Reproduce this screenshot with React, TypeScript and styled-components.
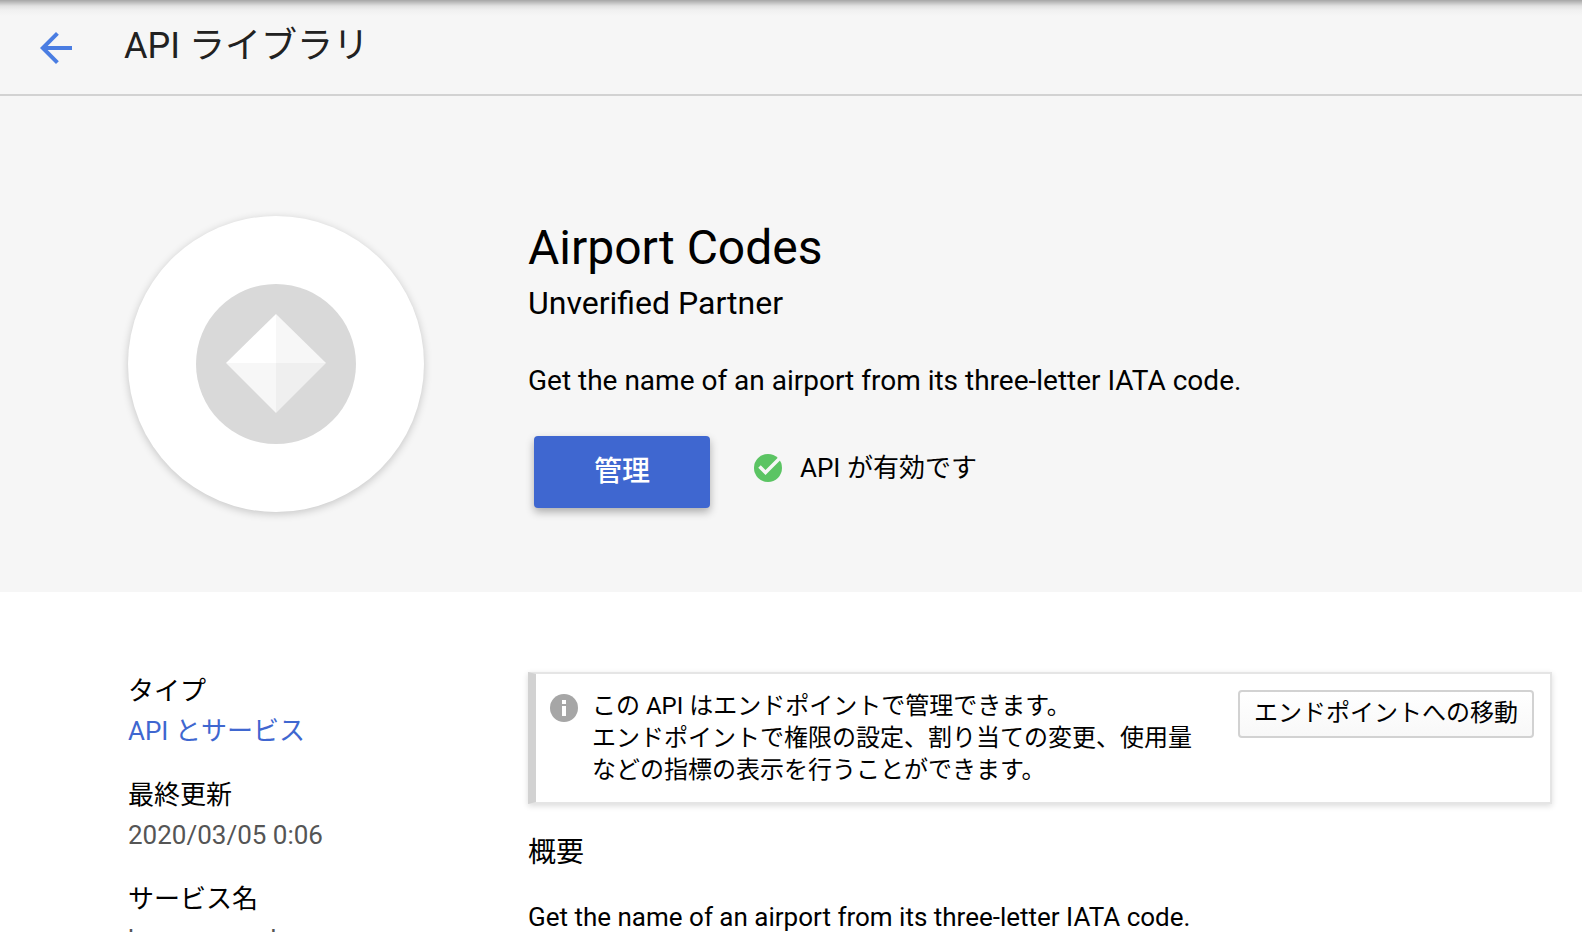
import React from "react";
import styled, { createGlobalStyle } from "styled-components";

const GlobalStyle = createGlobalStyle`
  *, *::before, *::after { box-sizing: border-box; }
  html { scrollbar-width: none; }
  body {
    margin: 0;
    background: #fff;
    color: #000;
    font-family: Roboto, "Noto Sans CJK JP", sans-serif;
    font-size: 26px;
    line-height: 40px;
  }
  h1, h2, p, dl, dt, dd { margin: 0; font-weight: 400; }
`;

const Header = styled.header`
  display: flex;
  align-items: center;
  gap: 44px;
  height: 96px;
  padding: 2px 32px 0;
  background: linear-gradient(#a6a6a6, #c4c4c4 3px, #e2e2e2 6px, #f0f0f0 10px, #f6f6f6 16px);
  border-bottom: 2px solid #d2d2d2;
`;

const BackButton = styled.button`
  display: flex;
  padding: 0;
  border: 0;
  background: none;
  cursor: pointer;
`;

const PageTitle = styled.h1`
  padding-bottom: 4px;
  font-size: 36px;
  line-height: 48px;
  color: #212121;
`;

const Hero = styled.section`
  display: flex;
  gap: 104px;
  padding: 120px 32px 80px 128px;
  background: #f6f6f6;
`;

const LogoDisc = styled.div`
  display: flex;
  flex: none;
  align-items: center;
  justify-content: center;
  width: 296px;
  height: 296px;
  border-radius: 50%;
  background: #fff;
  box-shadow: 0 2px 8px rgba(0, 0, 0, 0.2);
`;

const HeroText = styled.div`
  flex: 1;
  padding-top: 4px;
`;

const ProductName = styled.h2`
  font-size: 48px;
  line-height: 56px;
`;

const Vendor = styled.p`
  font-size: 32px;
  line-height: 54px;
`;

const Tagline = styled.p`
  padding-top: 29px;
  font-size: 28px;
  line-height: 44px;
`;

const Actions = styled.div`
  display: flex;
  align-items: center;
  gap: 44px;
  padding: 33px 6px 0;
`;

const ManageButton = styled.button`
  width: 176px;
  height: 72px;
  padding: 0;
  border: 0;
  border-radius: 4px;
  background: #3f67d0;
  box-shadow: 0 4px 8px rgba(0, 0, 0, 0.3);
  color: #fff;
  font: inherit;
  font-size: 28px;
  font-weight: 500;
  cursor: pointer;
`;

const Status = styled.p`
  display: flex;
  align-items: center;
  gap: 18px;
  padding-bottom: 8px;
`;

const Details = styled.main`
  display: flex;
  gap: 80px;
  padding: 79px 30px 0 128px;
`;

const Facts = styled.dl`
  flex: none;
  width: 320px;
  line-height: 40px;
`;

const Fact = styled.div`
  padding-bottom: 24px;
`;

const FactValue = styled.dd`
  color: #555;
`;

const FactLink = styled.a`
  color: #3f67d0;
  text-decoration: none;
`;

const Overview = styled.div`
  flex: 1;
  min-width: 0;
  padding-top: 1px;
`;

const Notice = styled.aside`
  display: flex;
  align-items: flex-start;
  gap: 14px;
  padding: 16px 16px 16px 14px;
  border: 2px solid #e5e5e5;
  border-left: 8px solid #d2d2d2;
  background: #fff;
  box-shadow: 0 2px 6px rgba(0, 0, 0, 0.14);
`;

const NoticeIcon = styled.span`
  display: flex;
  flex: none;
  padding-top: 4px;
`;

const NoticeText = styled.p`
  flex: 1;
  padding-right: 32px;
  font-size: 24px;
  line-height: 32px;
`;

const EndpointButton = styled.button`
  flex: none;
  height: 48px;
  padding: 0 14px 2px;
  border: 2px solid #d2d2d2;
  border-radius: 4px;
  background: linear-gradient(#fff, #f8f8f8);
  color: #000;
  font: inherit;
  font-size: 24px;
  line-height: 40px;
  cursor: pointer;
`;

const SectionTitle = styled.h2`
  padding: 29px 0 24px;
  font-size: 28px;
  line-height: 40px;
`;

const BackArrow = () => (
  <svg width="48" height="48" viewBox="0 0 24 24" fill="#4a7de2" aria-hidden="true">
    <path d="M20 11H7.83l5.59-5.59L12 4l-8 8 8 8 1.41-1.41L7.83 13H20v-2z" />
  </svg>
);

const ProductLogo = () => (
  <svg width="160" height="160" viewBox="0 0 160 160" aria-hidden="true">
    <circle cx="80" cy="80" r="80" fill="#d9d9d9" />
    <path d="M80 30V79H30z" fill="#fff" />
    <path d="M80 30V79H130z" fill="#f7f7f7" />
    <path d="M80 129V79H30z" fill="#f7f7f7" />
    <path d="M80 129V79H130z" fill="#efefef" />
  </svg>
);

const CheckIcon = () => (
  <svg width="28" height="28" viewBox="0 0 28 28" aria-hidden="true">
    <circle cx="14" cy="14" r="14" fill="#5bc463" />
    <path d="M5.500 12.500L11.500 18.500L25.500 4.500" fill="none" stroke="#f6f6f6" strokeWidth="3.500" />
  </svg>
);

const InfoIcon = () => (
  <svg width="28" height="28" viewBox="0 0 28 28" aria-hidden="true">
    <circle cx="14" cy="14" r="14" fill="#a6a6a6" />
    <path d="M12 6h4v4h-4zM12 12h4v10h-4z" fill="#fff" />
  </svg>
);

export default function App() {
  return (
    <>
      <GlobalStyle />
      <Header>
        <BackButton type="button" aria-label="戻る">
          <BackArrow />
        </BackButton>
        <PageTitle>API ライブラリ</PageTitle>
      </Header>
      <Hero>
        <LogoDisc>
          <ProductLogo />
        </LogoDisc>
        <HeroText>
          <ProductName>Airport Codes</ProductName>
          <Vendor>Unverified Partner</Vendor>
          <Tagline>Get the name of an airport from its three-letter IATA code.</Tagline>
          <Actions>
            <ManageButton type="button">管理</ManageButton>
            <Status>
              <CheckIcon />
              API が有効です
            </Status>
          </Actions>
        </HeroText>
      </Hero>
      <Details>
        <Facts>
          <Fact>
            <dt>タイプ</dt>
            <FactValue>
              <FactLink href="#services">API とサービス</FactLink>
            </FactValue>
          </Fact>
          <Fact>
            <dt>最終更新</dt>
            <FactValue>2020/03/05 0:06</FactValue>
          </Fact>
          <Fact>
            <dt>サービス名</dt>
            <FactValue>beacons.end</FactValue>
          </Fact>
        </Facts>
        <Overview>
          <Notice>
            <NoticeIcon>
              <InfoIcon />
            </NoticeIcon>
            <NoticeText>
              この API はエンドポイントで管理できます。
              <br />
              エンドポイントで権限の設定、割り当ての変更、使用量などの指標の表示を行うことができます。
            </NoticeText>
            <EndpointButton type="button">エンドポイントへの移動</EndpointButton>
          </Notice>
          <SectionTitle>概要</SectionTitle>
          <p>Get the name of an airport from its three-letter IATA code.</p>
        </Overview>
      </Details>
    </>
  );
}
